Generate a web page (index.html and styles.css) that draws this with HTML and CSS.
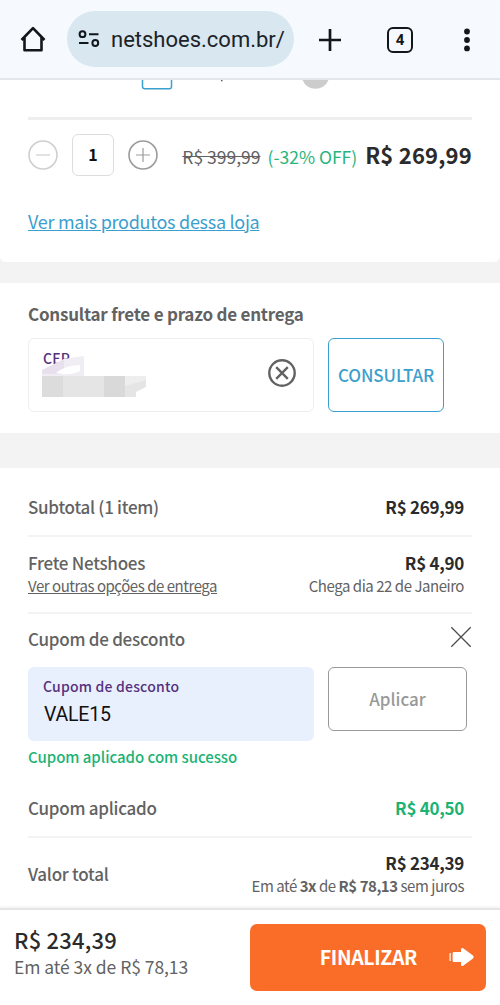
FILE: index.html
```html
<!DOCTYPE html>
<html lang="pt-BR">
<head>
<meta charset="utf-8">
<title>Netshoes - Carrinho</title>
<link rel="stylesheet" href="styles.css">
</head>
<body>
<header class="browser">
  <svg class="home" width="28" height="30" viewBox="0 0 28 30"><path d="M2.500 15 14 3.200 25.500 15M5.500 12.500V25.300h17V12.500" fill="none" stroke="#11171b" stroke-width="2.600" stroke-linejoin="round"/></svg>
  <div class="address">
    <svg width="24" height="20" viewBox="0 0 24 20" fill="none" stroke="#11171b" stroke-width="2"><circle cx="5.500" cy="5.200" r="2.900"/><path d="M12 5.200h9.500M2 14h9.500"/><circle cx="18.300" cy="14" r="2.900"/></svg>
    <span class="url">netshoes.com.br/</span>
  </div>
  <svg class="new-tab" width="24" height="24" viewBox="0 0 24 24"><path d="M12 1v22M1 12h22" stroke="#11171b" stroke-width="2.700"/></svg>
  <div class="tabs">4</div>
  <svg class="more" width="8" height="24" viewBox="0 0 8 24" fill="#11171b"><circle cx="4" cy="3.500" r="2.900"/><circle cx="4" cy="12" r="2.900"/><circle cx="4" cy="20.400" r="2.900"/></svg>
</header>

<section class="product">
  <div class="clipped">
    <svg width="444" height="12" viewBox="0 0 444 12"><path d="M114.500 0V6.500Q114.500 8.800 117 8.800H141.500Q143.500 8.800 143.500 6.500V0" fill="none" stroke="#3ba0cd" stroke-width="1.500"/><path d="M193 0h1.500v1.300H193z" fill="#555"/><path d="M274.500 0a14 14 0 0 0 26 0z" fill="#ccc"/></svg>
  </div>
  <div class="quantity">
    <svg width="30" height="30" viewBox="0 0 30 30" fill="none" stroke="#cfcfcf" stroke-width="1.600"><circle cx="15" cy="15" r="14"/><path d="M8 15h14" stroke-width="1.200"/></svg>
    <div class="count">1</div>
    <svg width="30" height="30" viewBox="0 0 30 30" fill="none" stroke="#9b9b9b" stroke-width="1.600"><circle cx="15" cy="15" r="14"/><path d="M8 15h14M15 8v14" stroke-width="1.200"/></svg>
    <div class="prices"><s class="old">R$ 399,99</s><span class="off">(-32% OFF)</span><b class="price">R$ 269,99</b></div>
  </div>
  <a class="store-link">Ver mais produtos dessa loja</a>
</section>

<section class="shipping">
  <h2>Consultar frete e prazo de entrega</h2>
  <div class="fields">
    <div class="field cep">
      <span class="label">CEP</span>
      <svg class="redaction" width="120" height="44" viewBox="0 0 120 44"><path d="M22 3 42 0V20H0V14Q14 8 22 3Z" fill="#f1edf4"/><path d="M0 14Q12 8 22 3V18H0Z" fill="#e9e0ee"/><path d="M14 17Q24 9 38 9V15Q28 19 20 18Z" fill="#fff"/><path d="M0 20H104V31L94 36V41H0Z" fill="#e5e5e5"/><path d="M0 20H21V41H0Z" fill="#dcdcdd"/><path d="M62 20H83V41H62Z" fill="#d9d9d9"/><path d="M83 20H104V24L83 30Z" fill="#eee"/></svg>
      <svg class="clear" width="30" height="30" viewBox="0 0 30 30" fill="none" stroke="#626262" stroke-width="2.400"><circle cx="15" cy="15" r="12.700"/><path d="m9.200 9.200 11.600 11.600m0-11.600L9.200 20.800"/></svg>
    </div>
    <button class="consult"><span>CONSULTAR</span></button>
  </div>
</section>

<section class="summary">
  <div class="row subtotal"><span class="name">Subtotal (1 item)</span><b class="value">R$ 269,99</b></div>
  <div class="row freight">
    <div><div class="name">Frete Netshoes</div><a class="small options">Ver outras opções de entrega</a></div>
    <div class="right"><b class="value">R$ 4,90</b><div class="small arrives">Chega dia 22 de Janeiro</div></div>
  </div>
  <div class="coupon-title"><span class="name">Cupom de desconto</span>
    <svg width="22" height="22" viewBox="0 0 22 22"><path d="m1.300 1.300 19.400 19.400m0-19.400L1.300 20.700" stroke="#4e4e4e" stroke-width="1.300"/></svg>
  </div>
  <div class="fields coupon-fields">
    <div class="field coupon"><span class="label">Cupom de desconto</span><span class="code">VALE15</span></div>
    <button class="apply">Aplicar</button>
  </div>
  <div class="success">Cupom aplicado com sucesso</div>
  <div class="row applied"><span class="name">Cupom aplicado</span><b class="value green">R$ 40,50</b></div>
  <div class="row total">
    <span class="name">Valor total</span>
    <div class="right"><b class="value">R$ 234,39</b><div class="small installments">Em até <b>3x</b> de <b>R$ 78,13</b> sem juros</div></div>
  </div>
</section>

<footer class="checkout">
  <div><div class="sum">R$ 234,39</div><div class="parcel">Em até 3x de R$ 78,13</div></div>
  <button class="finish"><span>FINALIZAR</span>
    <svg width="26" height="20" viewBox="0 0 26 20" fill="#fff"><path d="M.5 6h1.200v8H.5zM5 5H12V2.500Q12 .2 14.200 1.300L24 8.500Q25.500 10 24 11.500L14.200 18.700Q12 19.800 12 17.500V15H5Q3.600 15 3.600 13.800V6.200Q3.600 5 5 5Z"/></svg>
  </button>
</footer>
</body>
</html>
```

FILE: styles.css
```css
* { box-sizing: border-box; margin: 0; padding: 0; }
html { overflow: hidden; }
body { width: 500px; height: 1005px; overflow: hidden; background: #f3f3f3; color: #626262; font-family: "Noto Sans CJK SC", "Noto Sans", sans-serif; font-size: 17px; line-height: 20px; white-space: nowrap; }
svg { display: block; flex: none; }
button { background: none; font: inherit; }

.browser { display: flex; align-items: center; height: 80px; padding: 1px 29px 0 19px; background: #f6f9fe; border-bottom: 2px solid #e1e7ed; }
.address { display: flex; align-items: center; width: 228px; height: 56px; margin: -1px 0 0 20px; padding-left: 10px; border-radius: 28px; background: #d9e7f0; overflow: hidden; }
.url { width: 180px; margin-left: 10px; padding-top: 2px; color: #1b2328; font: 22px/28px Roboto, sans-serif; letter-spacing: 0; }
.new-tab { margin-left: 24px; }
.tabs { width: 26px; height: 26px; margin-left: 45px; border: 2.500px solid #11171b; border-radius: 6px; color: #11171b; font: 700 15px/22px Roboto, sans-serif; text-align: center; }
.more { margin-left: 50px; }

.product { height: 182px; padding: 0 28px; background: #fff; border-radius: 0 0 6px 6px; }
.clipped { height: 40px; border-bottom: 3px solid #eee; }
.quantity { display: flex; align-items: center; height: 70px; }
.count { width: 42px; height: 42px; margin: 0 14px; border: 1.500px solid #ddd; border-radius: 6px; color: #111; font-weight: 700; font-size: 16px; line-height: 38px; text-align: center; }
.prices { display: flex; align-items: baseline; flex: 1; justify-content: flex-end; }
.old { font-size: 17.500px; }
.off { margin-left: 7px; color: #27b47c; font-size: 17.500px; }
.price { margin-left: 8px; font-size: 22px; color: #2b2b2b; letter-spacing: .2px; }
.store-link { display: inline-block; margin-top: 21px; color: #3ba0cd; font-size: 18px; letter-spacing: -.28px; text-decoration: underline; }

.shipping { height: 150px; margin-top: 21px; padding: 21px 28px 0; background: #fff; }
h2 { font-size: 17px; font-weight: 700; letter-spacing: -.22px; }
.fields { display: flex; gap: 14px; margin-top: 14px; }
.field { position: relative; display: flex; flex-direction: column; width: 286px; height: 74px; padding-left: 15px; border-radius: 6px; }
.cep { padding-left: 14px; border: 1.500px solid #eee; }
.label { margin-top: 9px; color: #56307c; font-size: 14px; font-weight: 500; letter-spacing: .2px; }
.redaction { position: absolute; left: 13px; top: 17px; }
.clear { position: absolute; right: 16px; top: 19px; }
.consult { width: 116px; height: 74px; border: 1.500px solid #3ba0cd; border-radius: 6px; color: #3ba0cd; font-weight: 500; letter-spacing: -.1px; }

.summary { height: 440px; margin-top: 35px; padding: 0 28px; background: #fff; }
.row { display: flex; justify-content: space-between; padding-right: 8px; border-bottom: 2px solid #f3f3f3; }
.name { font-weight: 500; letter-spacing: -.26px; }
.value { display: block; color: #2b2b2b; font-weight: 700; letter-spacing: -.28px; }
.right { text-align: right; }
.small { display: block; font-size: 15px; line-height: 26px; letter-spacing: -.46px; }
.small b { font-weight: 700; }
.options { text-decoration: underline; }
.subtotal { height: 69px; padding-top: 29px; }
.freight { height: 77px; padding-top: 16px; }
.coupon-title { display: flex; justify-content: space-between; height: 53px; padding-top: 12px; }
.coupon-title .name { margin-top: 3px; }
.coupon-fields { margin-top: 0; }
.coupon { background: #e8f0fe; }
.code { margin: 8px 0 0 1px; color: #111; font: 19.500px/22px Roboto, sans-serif; letter-spacing: -.2px; }
.apply { width: 139px; height: 64px; border: 1.500px solid #999; border-radius: 6px; color: #999; font-weight: 500; }
.success { margin-top: 6px; color: #1bb374; font-size: 15px; font-weight: 500; letter-spacing: -.04px; }
.applied { height: 71px; padding-top: 31px; }
.green { color: #1bb374; }
.total { padding-top: 15px; border: 0; }
.total .name { margin-top: 11px; }

.checkout { position: relative; display: flex; justify-content: space-between; height: 97px; padding: 16px 14px 14px; background: #fff; border-top: 2px solid #e5e5e5; box-shadow: 0 -1px 3px #0001; }
.sum { margin-top: 3px; color: #2b2b2b; font-size: 22px; font-weight: 500; letter-spacing: .2px; }
.parcel { margin-top: 8px; font-size: 17.500px; letter-spacing: -.05px; }
.finish { display: flex; align-items: center; justify-content: flex-end; gap: 32px; width: 236px; height: 67px; margin-top: -2px; padding: 0 11px 1px 0; border: 0; border-radius: 7px; background: #f96d29; color: #fff; font-size: 19.500px; font-weight: 700; letter-spacing: -.35px; }
```
